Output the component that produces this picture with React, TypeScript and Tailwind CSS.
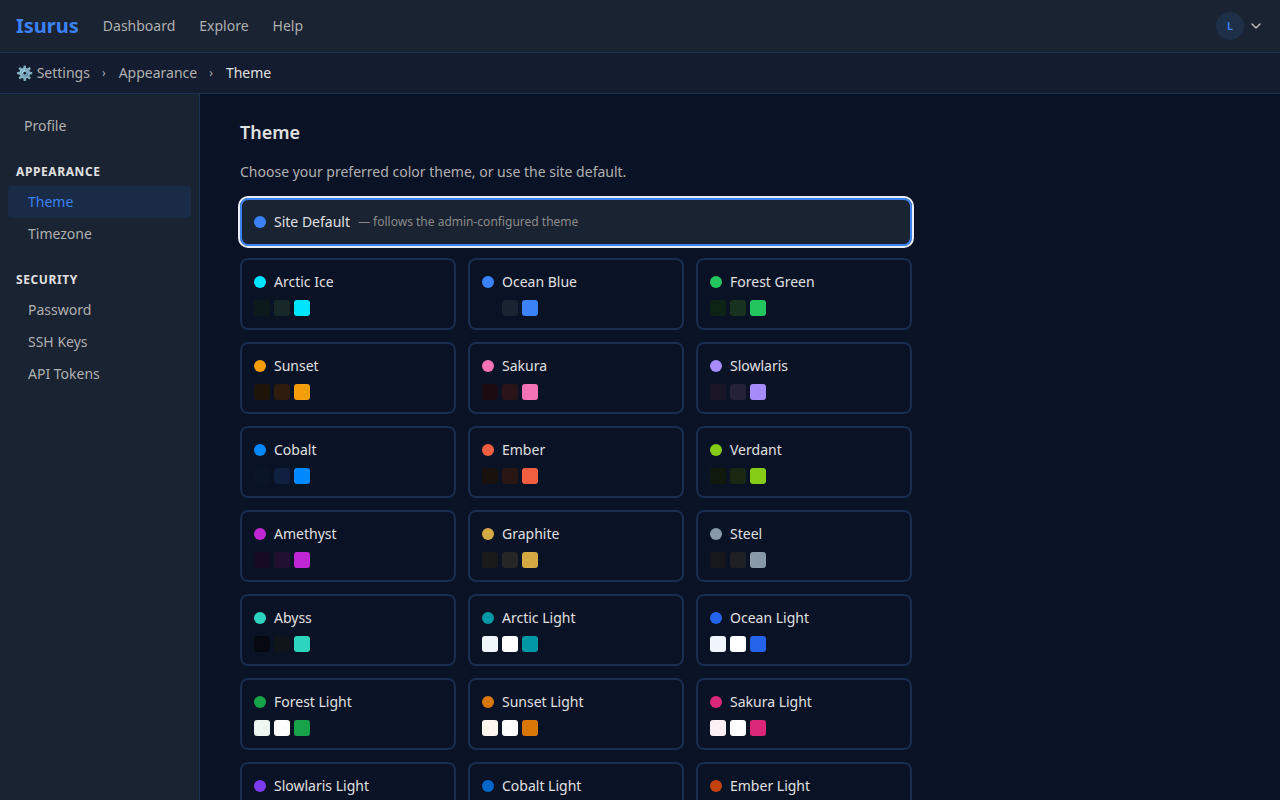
import { ChevronDown } from "lucide-react";

type ThemeOption = { name: string; bg: string; surface: string; accent: string };

const themes: ThemeOption[] = [
  { name: "Arctic Ice", bg: "#0d1a1c", surface: "#182829", accent: "#00e5ff" },
  { name: "Ocean Blue", bg: "#0a1326", surface: "#1a2332", accent: "#3b82f6" },
  { name: "Forest Green", bg: "#0d2415", surface: "#173320", accent: "#22c55e" },
  { name: "Sunset", bg: "#1f1408", surface: "#2e1c0e", accent: "#f59e0b" },
  { name: "Sakura", bg: "#1c0c12", surface: "#2a1418", accent: "#f472b6" },
  { name: "Slowlaris", bg: "#1a1628", surface: "#252238", accent: "#a78bfa" },
  { name: "Cobalt", bg: "#0a1528", surface: "#0f2040", accent: "#0088ff" },
  { name: "Ember", bg: "#1a100c", surface: "#2a1612", accent: "#f06040" },
  { name: "Verdant", bg: "#0f1a0c", surface: "#1a2812", accent: "#84cc16" },
  { name: "Amethyst", bg: "#160a24", surface: "#221030", accent: "#c026d3" },
  { name: "Graphite", bg: "#1a1a1a", surface: "#262626", accent: "#d4a843" },
  { name: "Steel", bg: "#16181c", surface: "#1e2024", accent: "#8899aa" },
  { name: "Abyss", bg: "#060a10", surface: "#0f1518", accent: "#2dd4bf" },
  { name: "Arctic Light", bg: "#f0f7fa", surface: "#ffffff", accent: "#0097a7" },
  { name: "Ocean Light", bg: "#f0f4fb", surface: "#ffffff", accent: "#2563eb" },
  { name: "Forest Light", bg: "#edf7ef", surface: "#ffffff", accent: "#16a34a" },
  { name: "Sunset Light", bg: "#fdf6ee", surface: "#ffffff", accent: "#d97706" },
  { name: "Sakura Light", bg: "#fdf0f4", surface: "#ffffff", accent: "#db2777" },
  { name: "Slowlaris Light", bg: "#f3f0fb", surface: "#ffffff", accent: "#7c3aed" },
  { name: "Cobalt Light", bg: "#eef4fb", surface: "#ffffff", accent: "#0066cc" },
  { name: "Ember Light", bg: "#fbf1ed", surface: "#ffffff", accent: "#c2410c" },
];

function SideLink({ label, active }: { label: string; active?: boolean }) {
  return (
    <div
      className={
        active
          ? "h-8 flex items-center px-5 rounded bg-[#1a2b47] text-[#3b82f6] text-sm"
          : "h-8 flex items-center px-5 rounded text-[#b0b0b0] text-sm"
      }
    >
      {label}
    </div>
  );
}

function ThemeCard({ theme }: { theme: ThemeOption }) {
  return (
    <div className="h-[72px] rounded-lg border-2 border-[#1a2d50] px-3 pt-3">
      <div className="flex items-center gap-2 h-5">
        <span className="w-3 h-3 rounded-full" style={{ background: theme.accent }} />
        <span className="text-sm text-[#e0e0e0]">{theme.name}</span>
      </div>
      <div className="flex gap-1 mt-2">
        {[theme.bg, theme.surface, theme.accent].map((color, i) => (
          <span key={i} className="w-4 h-4 rounded-[3px]" style={{ background: color }} />
        ))}
      </div>
    </div>
  );
}

export default function App() {
  return (
    <div className="h-screen overflow-hidden flex flex-col bg-[#0a1326] font-['Noto_Sans',sans-serif]">
      <header className="h-[53px] shrink-0 flex items-center justify-between pl-4 pr-4 bg-[#1a2332] border-b border-[#1e3050]">
        <div className="flex items-center">
          <span className="text-xl font-bold text-[#3b82f6] mr-6">Isurus</span>
          <nav className="flex gap-6 text-sm text-[#b0b0b0]">
            <span>Dashboard</span>
            <span>Explore</span>
            <span>Help</span>
          </nav>
        </div>
        <div className="flex items-center gap-1">
          <div className="w-7 h-7 rounded-full bg-[#1e3048] flex items-center justify-center text-[11px] font-semibold text-[#3b82f6]">
            L
          </div>
          <ChevronDown className="w-4 h-4 text-[#c4c4c4]" />
        </div>
      </header>

      <div className="h-[41px] shrink-0 flex items-center pl-4 bg-[#141d2f] border-b border-[#1e3050] text-sm text-[#b0b0b0]">
        <span>⚙️ Settings</span>
        <span className="ml-3 mr-[13px] text-xs">›</span>
        <span>Appearance</span>
        <span className="ml-3 mr-[13px] text-xs">›</span>
        <span className="text-[#e0e0e0]">Theme</span>
      </div>

      <div className="flex flex-1 min-h-0">
        <aside className="w-[200px] shrink-0 bg-[#1a2332] border-r border-[#1e3050] px-2 pt-4">
          <div className="h-8 flex items-center px-4 text-sm text-[#b0b0b0]">Profile</div>
          <div className="mt-[22px] mb-[6px] h-4 flex items-center px-2 text-xs font-bold tracking-[0.6px] text-[#e0e0e0]">
            APPEARANCE
          </div>
          <SideLink label="Theme" active />
          <SideLink label="Timezone" />
          <div className="mt-[22px] mb-[6px] h-4 flex items-center px-2 text-xs font-bold tracking-[0.6px] text-[#e0e0e0]">
            SECURITY
          </div>
          <SideLink label="Password" />
          <SideLink label="SSH Keys" />
          <SideLink label="API Tokens" />
        </aside>

        <main className="flex-1 pl-10 pt-6">
          <div className="w-[672px]">
            <h1 className="text-lg leading-7 font-semibold text-[#e0e0e0]">Theme</h1>
            <p className="mt-[14px] text-sm leading-6 text-[#b0b0b0]">
              Choose your preferred color theme, or use the site default.
            </p>
            <div className="mt-[14px] h-12 rounded-lg border-2 border-[#3b82f6] outline-2 outline-[#e8edf4] bg-[#1a2332] flex items-center gap-2 px-3">
              <span className="w-3 h-3 rounded-full bg-[#3b82f6]" />
              <span className="text-sm text-[#e0e0e0]">Site Default</span>
              <span className="text-xs text-[#8a8a8a]">— follows the admin-configured theme</span>
            </div>
            <div className="mt-3 grid grid-cols-3 gap-3">
              {themes.map((theme) => (
                <ThemeCard key={theme.name} theme={theme} />
              ))}
            </div>
          </div>
        </main>
      </div>
    </div>
  );
}
